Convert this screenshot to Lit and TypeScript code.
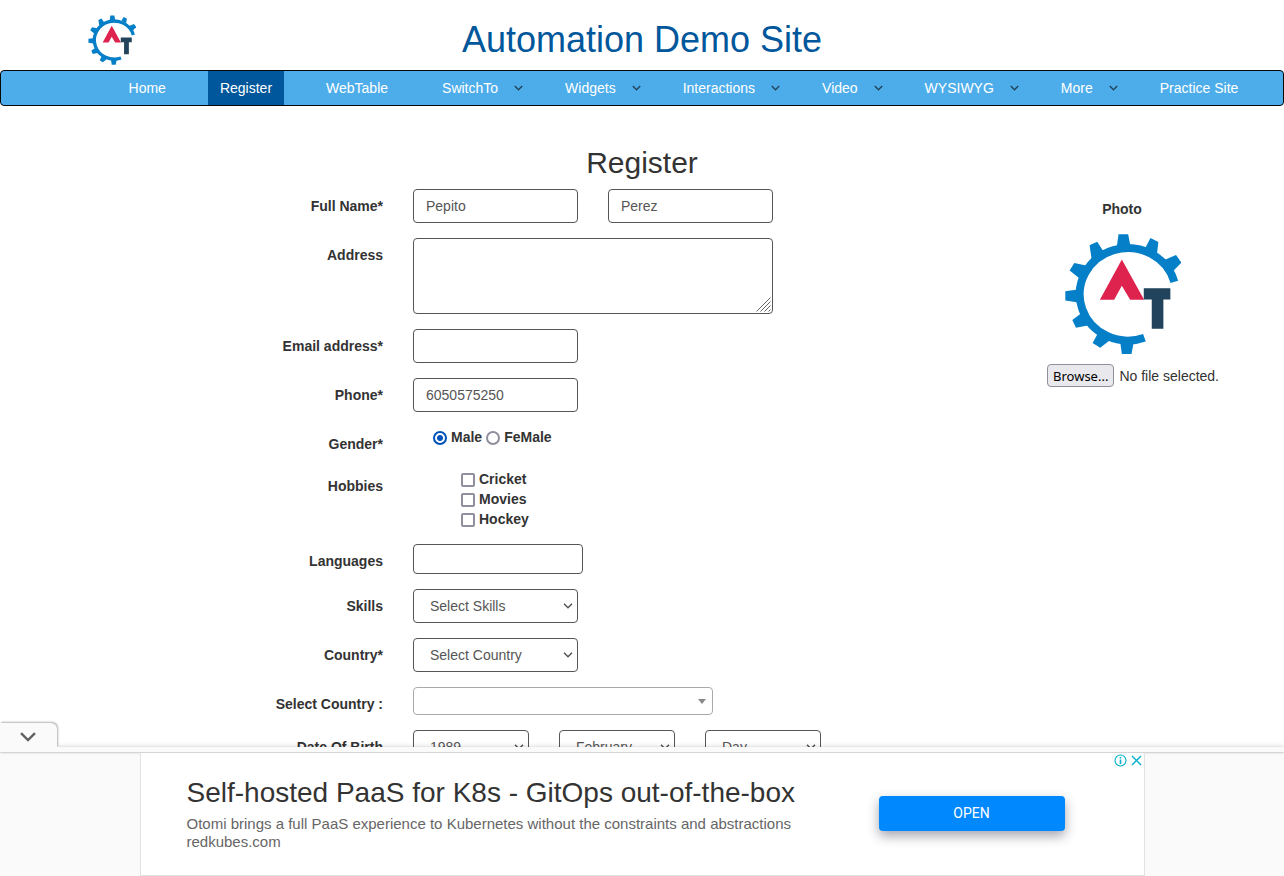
import { LitElement, html, css, svg, nothing } from "lit";
import { customElement, property } from "lit/decorators.js";
import { classMap } from "lit/directives/class-map.js";

interface NavItem {
  label: string;
  active?: boolean;
  menu?: boolean;
}

const NAV: NavItem[] = [
  { label: "Home" },
  { label: "Register", active: true },
  { label: "WebTable" },
  { label: "SwitchTo", menu: true },
  { label: "Widgets", menu: true },
  { label: "Interactions", menu: true },
  { label: "Video", menu: true },
  { label: "WYSIWYG", menu: true },
  { label: "More", menu: true },
  { label: "Practice Site" },
];

const TEETH = [
  "262,168 267,132 296,132 303,168",
  "348,172 363,143 387,155 383,188",
  "403,210 440,194 456,217 426,248",
  "186,206 180,165 203,154 222,184",
  "180,228 134,218 120,241 152,266",
  "144,298 107,303 107,331 146,337",
  "152,372 128,390 139,413 182,405",
  "206,428 189,459 212,473 242,450",
  "272,455 277,492 306,492 313,455",
];

@customElement("gear-logo")
export class GearLogo extends LitElement {
  static styles = css`
    :host { display: block; }
    svg { display: block; width: 100%; height: 100%; }
    .gear { fill: #047fc8; }
    .ring { fill: none; stroke: #047fc8; stroke-width: 24; }
    .a { fill: #df234f; }
    .t { fill: #21435c; }
  `;
  render() {
    return html`<svg viewBox="104 131 350 361" role="img" aria-label="Automation Testing">
      <path class="ring" d="M435 275 A145 139 0 1 0 345 443" />
      ${TEETH.map((p) => svg`<polygon class="gear" points=${p} />`)}
      <polygon class="a" points="277,208 344,329 302,329 277,287 254,329 211,329" />
      <polygon class="t" points="343,294 423,294 423,328 402,328 402,416 367,416 367,328 343,328" />
    </svg>`;
  }
}

@customElement("nav-bar")
export class NavBar extends LitElement {
  @property({ attribute: false }) items: NavItem[] = [];
  static styles = css`
    :host { display: block; }
    .bar {
      background: #4dadea;
      border: 1px solid #080808;
      border-radius: 4px;
      padding-left: 9%;
    }
    .list {
      display: flex;
      gap: 30px;
      margin: 0;
      padding: 0;
      list-style: none;
    }
    .link {
      display: flex;
      align-items: center;
      gap: 16px;
      padding: 0 12px;
      font-size: 14px;
      line-height: 34px;
      color: #fff;
      text-decoration: none;
      white-space: nowrap;
    }
    .menu { padding-right: 0; }
    .active { background: #01579b; }
    .chev { width: 9px; height: 6px; fill: none; stroke: #24465f; stroke-width: 1.5; }
  `;
  render() {
    return html`<nav class="bar">
      <ul class="list">
        ${this.items.map(
          (i) => html`<li>
            <a href="#" class=${classMap({ link: true, active: !!i.active, menu: !!i.menu })}
              >${i.label}${i.menu
                ? html`<svg class="chev" viewBox="0 0 9 6"><path d="M0.8 1 L4.5 4.7 L8.2 1" /></svg>`
                : nothing}</a
            >
          </li>`
        )}
      </ul>
    </nav>`;
  }
}

@customElement("register-form")
export class RegisterForm extends LitElement {
  static styles = css`
    :host { display: block; }
    .layout {
      display: grid;
      grid-template-columns: 1fr 180px;
      max-width: 1140px;
      margin: 0 auto;
      padding: 0 15px;
    }
    .rows { display: flex; flex-direction: column; gap: 15px; margin: 0; }
    .row {
      display: grid;
      grid-template-columns: 311px 1fr;
      column-gap: 30px;
      align-items: start;
    }
    .name {
      padding-top: 7px;
      text-align: right;
      font-weight: 700;
      line-height: 20px;
    }
    .fields { display: flex; gap: 30px; }
    .control {
      box-sizing: border-box;
      width: 165px;
      height: 34px;
      margin: 0;
      padding: 6px 12px;
      border: 1px solid #555;
      border-radius: 4px;
      background-color: #fff;
      color: #555;
      font: inherit;
      line-height: 20px;
    }
    .area {
      width: 360px;
      height: 76px;
      resize: none;
      background-image: url("data:image/svg+xml,%3Csvg xmlns='http://www.w3.org/2000/svg' width='15' height='15'%3E%3Cpath d='M.5 14.5 14.5.5M4.5 14.5l10-10M8.5 14.5l6-6M12.5 14.5l2-2' stroke='%23666' fill='none'/%3E%3C/svg%3E");
      background-repeat: no-repeat;
      background-position: right 1px bottom 1px;
    }
    .languages { width: 170px; height: 30px; }
    .select {
      appearance: none;
      padding: 6px 24px 6px 16px;
      background-image: url("data:image/svg+xml,%3Csvg xmlns='http://www.w3.org/2000/svg' width='10' height='6'%3E%3Cpath d='M1 .8 5 4.8 9 .8' stroke='%23555' stroke-width='1.5' fill='none'/%3E%3C/svg%3E");
      background-repeat: no-repeat;
      background-position: right 4px center;
    }
    .date { width: 116px; }
    .search {
      width: 300px;
      height: 28px;
      padding: 3px 20px 3px 8px;
      border-color: #aaa;
      background-image: url("data:image/svg+xml,%3Csvg xmlns='http://www.w3.org/2000/svg' width='8' height='5'%3E%3Cpath d='M0 0h8L4 5z' fill='%23888'/%3E%3C/svg%3E");
      background-position: right 6px center;
    }
    .radios { display: flex; gap: 4px; padding-left: 20px; }
    .checks { display: flex; flex-direction: column; padding-left: 48px; }
    .option {
      display: flex;
      align-items: center;
      gap: 4px;
      font-weight: 700;
      line-height: 20px;
    }
    .tick {
      appearance: none;
      box-sizing: border-box;
      width: 14px;
      height: 14px;
      margin: 2px 0 0;
      border: 2px solid #8f8f9d;
      border-radius: 2px;
      background: #fff;
    }
    .round { border-radius: 50%; }
    .round:checked {
      border-color: #0053b8;
      background: radial-gradient(circle, #0053b8 2.5px, #fff 3.5px);
    }
    .photo { display: flex; flex-direction: column; align-items: center; padding-top: 10px; }
    .caption { font-weight: 700; line-height: 20px; }
    .logo { width: 117px; height: 120px; margin: 15px 0 10px; }
    .file {
      display: flex;
      align-items: center;
      align-self: stretch;
      gap: 5px;
      padding-left: 15px;
      white-space: nowrap;
    }
    .picker {
      position: absolute;
      width: 1px;
      height: 1px;
      overflow: hidden;
      opacity: 0;
    }
    .browse {
      box-sizing: border-box;
      height: 23px;
      padding: 0 5px;
      border: 1px solid #8f8f9d;
      border-radius: 4px;
      background: #e9e9ed;
      color: #000;
      font-family: "Noto Sans", sans-serif;
      font-size: 13px;
      line-height: 22px;
    }
  `;

  private row(id: string, label: string, fields: unknown) {
    return html`<div class="row">
      <label class="name" for=${id}>${label}</label>
      <div class="fields">${fields}</div>
    </div>`;
  }

  private hobby(label: string) {
    return html`<label class="option"><input class="tick" type="checkbox" />${label}</label>`;
  }

  render() {
    return html`<div class="layout">
      <form class="rows">
        ${this.row("first", "Full Name*", html`
          <input id="first" class="control" type="text" .value=${"Pepito"} />
          <input class="control" type="text" aria-label="Last Name" .value=${"Perez"} />`)}
        ${this.row("address", "Address", html`<textarea id="address" class="control area"></textarea>`)}
        ${this.row("email", "Email address*", html`<input id="email" class="control" type="email" />`)}
        ${this.row("phone", "Phone*", html`<input id="phone" class="control" type="tel" .value=${"6050575250"} />`)}
        <div class="row" role="radiogroup" aria-labelledby="gender">
          <span id="gender" class="name">Gender*</span>
          <div class="radios">
            <label class="option"><input class="tick round" type="radio" name="gender" checked />Male</label>
            <label class="option"><input class="tick round" type="radio" name="gender" />FeMale</label>
          </div>
        </div>
        <div class="row" role="group" aria-labelledby="hobbies">
          <span id="hobbies" class="name">Hobbies</span>
          <div class="checks">${["Cricket", "Movies", "Hockey"].map((h) => this.hobby(h))}</div>
        </div>
        ${this.row("languages", "Languages", html`<input id="languages" class="control languages" type="text" />`)}
        ${this.row("skills", "Skills", html`<select id="skills" class="control select"><option>Select Skills</option></select>`)}
        ${this.row("country", "Country*", html`<select id="country" class="control select"><option>Select Country</option></select>`)}
        ${this.row("pick", "Select Country :", html`<select id="pick" class="control select search"><option></option></select>`)}
        ${this.row("year", "Date Of Birth", html`
          <select id="year" class="control select date"><option>1989</option></select>
          <select class="control select date" aria-label="Month"><option>February</option></select>
          <select class="control select date" aria-label="Day"><option>Day</option></select>`)}
      </form>
      <div class="photo">
        <span class="caption">Photo</span>
        <gear-logo class="logo"></gear-logo>
        <label class="file">
          <input class="picker" type="file" />
          <span class="browse">Browse...</span>
          <span>No file selected.</span>
        </label>
      </div>
    </div>`;
  }
}

@customElement("ad-banner")
export class AdBanner extends LitElement {
  static styles = css`
    :host {
      display: block;
      position: relative;
      background: #fafafa;
      box-shadow: 0 0 5px rgba(0, 0, 0, 0.2);
    }
    .tab {
      position: absolute;
      left: 0;
      bottom: 100%;
      display: flex;
      align-items: center;
      justify-content: center;
      width: 57px;
      height: 24px;
      padding: 4px 1px 0 0;
      box-sizing: border-box;
      border: 0;
      border-radius: 0 6px 0 0;
      background: #fafafa;
      box-shadow: 1px -1px 2px rgba(0, 0, 0, 0.3);
      clip-path: inset(-4px -4px 0 0);
    }
    .down { width: 16px; height: 10px; fill: none; stroke: #616161; stroke-width: 2.4; }
    .edge { height: 5px; box-shadow: 0 1px 2px rgba(0, 0, 0, 0.2); }
    .card {
      position: relative;
      box-sizing: border-box;
      display: grid;
      grid-template-columns: 1fr 186px;
      align-items: center;
      max-width: 1005px;
      height: 124px;
      margin: 0 auto;
      padding: 0 79px 2px 46px;
      border: 1px solid #e2e2e2;
      border-top-color: #d4d4d4;
      background: #fff;
    }
    .title {
      margin: 0 0 4px;
      font-size: 28px;
      font-weight: 400;
      line-height: 36px;
      color: #333;
    }
    .text { margin: 0; font-size: 15px; line-height: 18px; color: #666; }
    .open {
      height: 35px;
      border: 0;
      border-radius: 4px;
      background: #0088ff;
      box-shadow: 0 5px 12px rgba(50, 55, 80, 0.45);
      color: #fff;
      font: 14px "Roboto", sans-serif;
    }
    .badges { position: absolute; top: 1px; right: 1px; display: flex; gap: 3px; }
    .badge {
      width: 13px;
      height: 13px;
      padding: 0;
      border: 0;
      background: none;
    }
    .glyph { display: block; width: 13px; height: 13px; fill: none; stroke: #00aecd; stroke-width: 1.1; }
  `;
  render() {
    return html`
      <button class="tab" aria-label="Hide">
        <svg class="down" viewBox="0 0 16 10"><path d="M1 1.2 L8 8 L15 1.2" /></svg>
      </button>
      <div class="edge"></div>
      <section class="card">
        <div>
          <h3 class="title">Self-hosted PaaS for K8s - GitOps out-of-the-box</h3>
          <p class="text">Otomi brings a full PaaS experience to Kubernetes without the constraints and abstractions</p>
          <p class="text">redkubes.com</p>
        </div>
        <button class="open">OPEN</button>
        <div class="badges">
          <button class="badge" aria-label="Why this ad">
            <svg class="glyph" viewBox="0 0 13 13"><circle cx="6.5" cy="6.5" r="5.5" /><path d="M6.5 5.5 V10 M6.5 3 V4.4" stroke-width="1.6" /></svg>
          </button>
          <button class="badge" aria-label="Close ad">
            <svg class="glyph" viewBox="0 0 13 13"><path d="M2 2 L11 11 M11 2 L2 11" stroke-width="1.4" /></svg>
          </button>
        </div>
      </section>
    `;
  }
}

@customElement("app-root")
export class AppRoot extends LitElement {
  static styles = css`
    :host {
      display: flex;
      flex-direction: column;
      height: 100vh;
      overflow: hidden;
      background: #fff;
      color: #333;
      font-family: "Liberation Sans", Arial, sans-serif;
      font-size: 14px;
      line-height: 20px;
    }
    .head {
      display: grid;
      grid-template-columns: 1fr auto 1fr;
      align-items: center;
      height: 70px;
      flex: none;
    }
    .brand { width: 48px; height: 50px; margin: 10px 0 0 88px; }
    .site {
      margin: 10px 0 0;
      font-size: 36px;
      font-weight: 400;
      line-height: 40px;
      color: #01579b;
    }
    .page { flex: 1; min-height: 0; overflow: auto; scrollbar-width: none; }
    .heading {
      margin: 40px 0 10px;
      font-size: 30px;
      font-weight: 400;
      line-height: 33px;
      text-align: center;
    }
    .ad { flex: none; }
  `;
  render() {
    return html`
      <header class="head">
        <gear-logo class="brand"></gear-logo>
        <h1 class="site">Automation Demo Site</h1>
      </header>
      <nav-bar .items=${NAV}></nav-bar>
      <main class="page">
        <h2 class="heading">Register</h2>
        <register-form></register-form>
      </main>
      <ad-banner class="ad"></ad-banner>
    `;
  }
}
